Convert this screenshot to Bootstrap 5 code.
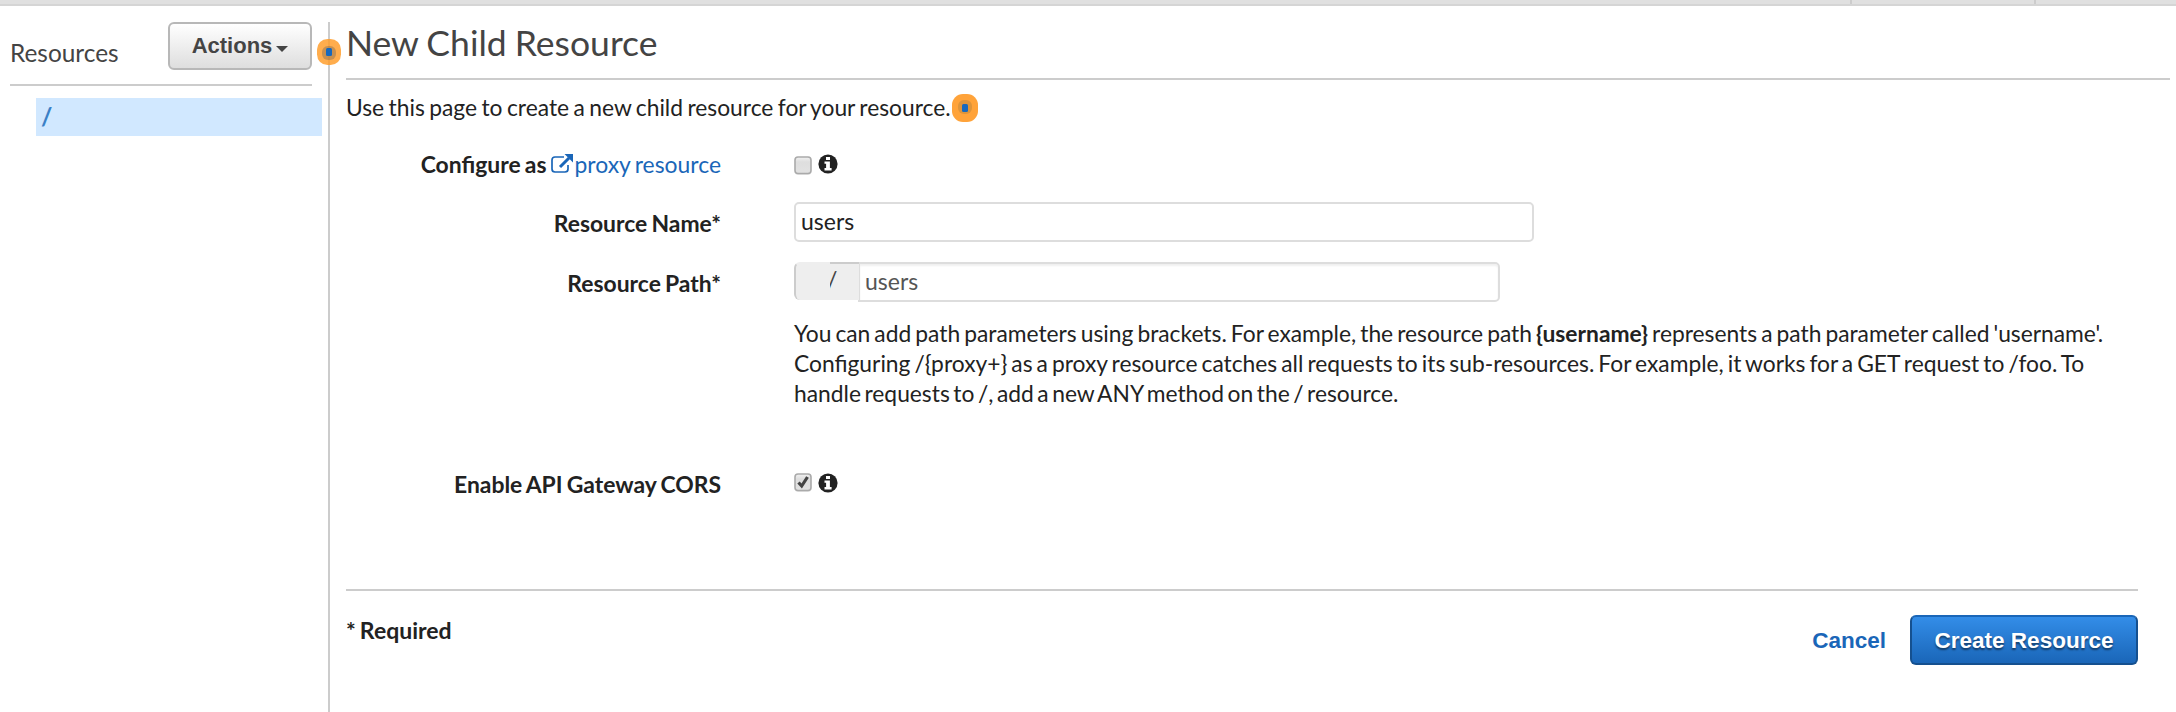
<!DOCTYPE html>
<html lang="en">
<head>
<meta charset="utf-8">
<title>New Child Resource</title>
<link href="https://cdn.jsdelivr.net/npm/bootstrap@5.3.0/dist/css/bootstrap.min.css" rel="stylesheet">
<script src="https://cdn.jsdelivr.net/npm/bootstrap@5.3.0/dist/js/bootstrap.bundle.min.js" defer></script>
<style>
body{font-family:Lato,sans-serif;font-size:23px;line-height:30px;color:#222;height:712px;overflow:hidden;background:#fff}
.topbar{height:6px;background:#e0e0e0;border-bottom:2px solid #d5d5d5;padding-right:140px}
.topbar span{width:2px;height:4px;background:#ccc;margin-left:182px}
.workspace{height:706px}
.sidebar{width:328px;padding-left:10px}
.side-head{width:302px;height:64px;border-bottom:2px solid #ccc;color:#444}
.side-title{padding-top:16px;font-size:24.4px}
.btn-actions{width:144px;height:48px;padding:0;border:2px solid #b8b8b8;border-radius:6px;background:linear-gradient(#fff,#dedede);color:#444;font:bold 22px/40px "Liberation Sans",sans-serif}
.btn-actions::after{margin-left:4px;vertical-align:1px;border-top:6px solid;border-left:6px solid transparent;border-right:6px solid transparent}
.tree-item{width:286px;height:38px;margin:12px 0 0 26px;padding:4px 5px;background:#d1e8ff;color:#3a80c6;font-size:24.5px;font-weight:700}
.main-pane{border-left:2px solid #ccc;padding-left:16px}
.hotspot{left:317px;top:33px;width:24px;height:26px;z-index:2}
.page-title{font-size:35.5px;line-height:41px;height:58px;width:1824px;color:#444;border-bottom:2px solid #ccc;margin:0;font-weight:400;word-spacing:-1px}
.intro{margin:12px 0 0;height:30px;font-size:22.8px;word-spacing:-1.4px}
.hot-inline{width:26px;height:28px;margin:2px 0 0 1px}
.form-line{margin-top:20px}
.form-key{width:375px;text-align:right;font-weight:700;margin-right:73px;white-space:nowrap;font-size:22.9px;word-spacing:-1.4px}
.pad-key{padding-top:6px}
.aws-link{color:#1a66b8;font-weight:400;text-decoration:none}
.aws-input{height:40px;border:2px solid #ddd;border-radius:5px;padding:0 5px 2px;font-size:23px;line-height:34px;color:#222;background:#fff}
.path-addon{width:65px;height:38px;border:2px solid #ccc;border-right:0;border-bottom:0;border-top-color:#eee;border-radius:6px 0 0 6px;background:#eee;position:relative}
.path-addon .inner-edge{position:absolute;left:34px;right:0;top:-2px;height:2px;background:#ccc}
.path-addon .slash{position:absolute;left:34px;top:0;width:10px;height:30px;overflow:hidden;text-indent:-3px;color:#444}
.help-text{width:1360px;margin-top:16px;font-size:22.8px;word-spacing:-1.8px;white-space:nowrap}
.help-text .tight{word-spacing:-2.3px}
.form-end{width:1792px;margin-top:90px;border-top:2px solid #ccc;padding-top:24px}
.form-note{word-spacing:-1.5px}
.btn-create{width:228px;height:50px;padding:1px 0 0;border:2px solid #15508f;border-top-color:#1a66b8;border-radius:6px;background:linear-gradient(#338de8,#1a66b8);color:#fff;font:bold 22.5px/45px "Liberation Sans",sans-serif;text-shadow:0 2px 2px rgba(0,0,0,.5)}
.btn-cancel{color:#1a66b8;font:bold 22.5px/52px "Liberation Sans",sans-serif;text-decoration:none;margin-right:24px}
svg{display:block;flex:none}
</style>
</head>
<body>
<svg width="0" height="0" class="position-absolute">
<defs>
<linearGradient id="boxFill" x1="0" y1="0" x2="0" y2="1"><stop offset="0" stop-color="#f2f2f2"/><stop offset=".3" stop-color="#dedede"/><stop offset="1" stop-color="#e2e2e2"/></linearGradient>
<symbol id="box" viewBox="0 0 18 20"><rect x="1" y="2" width="16" height="17" rx="3" fill="#000" opacity=".1"/><rect x="1" y="1" width="16" height="16.5" rx="3" fill="url(#boxFill)" stroke="#aaa" stroke-width="1.6"/></symbol>
<symbol id="info" viewBox="0 0 20 20"><circle cx="10" cy="10" r="9.6" fill="#222"/><path fill="#fff" d="M8 3h4v3H8zM6.5 7.4h5.4v6.7h1.7v2.3H6.5v-2.3h1.6V9.7H6.5z"/></symbol>
</defs>
</svg>
<div class="topbar d-flex justify-content-end"><span></span><span></span></div>
<div class="workspace d-flex position-relative">
  <aside class="sidebar pt-3">
    <div class="side-head d-flex justify-content-between">
      <div class="side-title">Resources</div>
      <button class="btn btn-actions dropdown-toggle" type="button">Actions</button>
    </div>
    <div class="tree-item">/</div>
  </aside>
  <svg class="hotspot position-absolute" viewBox="0 0 24 26"><rect width="24" height="26" rx="10.5" fill="#ff9b26" opacity=".82"/><rect x="5" y="7" width="14" height="14" rx="6" fill="#555" opacity=".32"/><rect x="9" y="9" width="6" height="8" rx="1.5" fill="#1668bd"/></svg>
  <main class="main-pane flex-grow-1 mt-3">
    <h1 class="page-title">New Child Resource</h1>
    <p class="intro d-flex"><span>Use this page to create a new child resource for your resource.</span>
      <svg class="hot-inline" viewBox="0 0 26 28"><rect width="26" height="28" rx="11" fill="#ffa33a"/><rect x="6" y="6" width="14" height="14" rx="6" fill="#dd943b"/><rect x="10" y="10" width="6" height="8" rx="1.5" fill="#1668bd"/></svg>
    </p>
    <div class="form-line d-flex" style="margin-top:27px">
      <div class="form-key d-flex justify-content-end"><span>Configure as</span>
        <a class="aws-link d-flex" href="#"><svg width="24" height="20" viewBox="0 0 24 20" style="margin:5px 0 0 4px"><path d="M14 3H5Q2 3 2 6v9q0 3 3 3h10q3 0 3-3v-4" fill="none" stroke="#1a66b8" stroke-width="1.7"/><path d="M10 13 19 4" stroke="#1a66b8" stroke-width="3"/><path d="M14.5 0H23v8.5z" fill="#1a66b8"/></svg>proxy resource</a></div>
      <div class="d-flex"><svg width="18" height="20" style="margin-top:7px"><use href="#box"/></svg><svg width="20" height="20" style="margin:5px 0 0 6px"><use href="#info"/></svg></div>
    </div>
    <div class="form-line d-flex" style="margin-top:23px">
      <label class="form-key pad-key" for="rname">Resource Name*</label>
      <input id="rname" class="aws-input" style="width:740px" value="users">
    </div>
    <div class="form-line d-flex">
      <label class="form-key pad-key" for="rpath">Resource Path*</label>
      <div class="d-flex"><div class="path-addon"><span class="inner-edge"></span><span class="slash">/</span></div><input id="rpath" class="aws-input rounded-start-0" style="width:642px;margin-left:-1px;color:#555;box-shadow:inset 0 2px 2px #f0f0f0" value="users"></div>
    </div>
    <div class="d-flex">
      <div class="form-key"></div>
      <div class="help-text">You can add path parameters using brackets. For example, the resource path <b>{username}</b> represents a path parameter called 'username'.<br>Configuring /{proxy+} as a proxy resource catches all requests to its sub-resources. For example, it works for a GET request to /foo. To<br><span class="tight">handle requests to /, add a new ANY method on the / resource.</span></div>
    </div>
    <div class="d-flex" style="margin-top:61px">
      <div class="form-key">Enable API Gateway CORS</div>
      <div class="d-flex"><svg width="18" height="20" viewBox="0 0 18 20" style="margin-top:4px"><use href="#box"/><path d="m4.5 9.5 3.2 3.5L13.5 4" fill="none" stroke="#444" stroke-width="3.2"/></svg><svg width="20" height="20" style="margin:4px 0 0 6px"><use href="#info"/></svg></div>
    </div>
    <div class="form-end d-flex justify-content-between">
      <b class="form-note">* Required</b>
      <div class="d-flex align-items-start"><a href="#" class="btn-cancel">Cancel</a><button class="btn btn-create" type="button">Create Resource</button></div>
    </div>
  </main>
</div>
</body>
</html>
